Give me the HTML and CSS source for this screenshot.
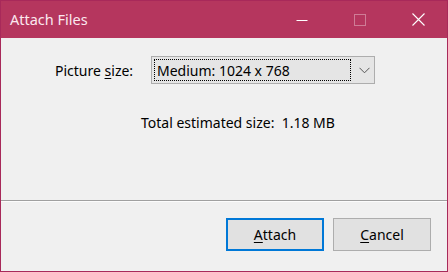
FILE: index.html
```html
<!DOCTYPE html>
<html>
<head>
<meta charset="utf-8">
<link rel="stylesheet" href="styles.css">
</head>
<body>
<div class="window">
  <div class="titlebar">
    <div class="title">Attach Files</div>
    <div class="controls">
      <div class="ctl">
        <svg width="12" height="12" viewBox="0 0 12 12"><path d="M0.5 6.5H11.5" stroke="#fff" stroke-width="1"/></svg>
      </div>
      <div class="ctl">
        <svg width="12" height="12" viewBox="0 0 12 12"><rect x="0.5" y="0.5" width="11" height="11" fill="none" stroke="rgba(255,255,255,0.35)" stroke-width="1"/></svg>
      </div>
      <div class="ctl">
        <svg width="13" height="13" viewBox="0 0 13 13"><path d="M0.5 0.5L12.5 12.5M12.5 0.5L0.5 12.5" stroke="#fff" stroke-width="1.1"/></svg>
      </div>
    </div>
  </div>
  <div class="body">
    <div class="content">
      <div class="row">
        <span class="label">Picture <u>s</u>ize:</span>
        <div class="select">
          <div class="focus">Medium: 1024 x 768</div>
          <svg class="chev" width="11" height="7" viewBox="0 0 11 7"><path d="M0.5 0.8L5.5 5.8L10.5 0.8" fill="none" stroke="#555" stroke-width="1"/></svg>
        </div>
      </div>
      <div class="total">Total estimated size:&nbsp; 1.18 MB</div>
    </div>
    <div class="sep"></div>
    <div class="footer">
      <button class="btn default"><u>A</u>ttach</button>
      <button class="btn"><u>C</u>ancel</button>
    </div>
  </div>
</div>
</body>
</html>
```
FILE: styles.css
```css
html, body {
  margin: 0;
  padding: 0;
}
body {
  width: 448px;
  height: 272px;
  overflow: hidden;
  font-family: "Noto Sans", "Open Sans", sans-serif;
  font-size: 14px;
  color: #000;
}
.window {
  width: 448px;
  height: 272px;
  box-sizing: border-box;
  border: 1px solid #a8295a;
  display: flex;
  flex-direction: column;
  background: #f0f0f0;
}
.titlebar {
  height: 37px;
  flex: none;
  background: #b5365e;
  display: flex;
  align-items: center;
}
.title {
  padding-left: 9px;
  color: #fbe8ee;
  font-size: 14.5px;
  flex: 1;
  margin-top: -1px;
}
.controls {
  display: flex;
  height: 100%;
}
.ctl {
  width: 58px;
  display: flex;
  align-items: center;
  justify-content: center;
}
.ctl svg { display: block; }
.body {
  flex: 1;
  display: flex;
  flex-direction: column;
}
.content {
  height: 162px;
  box-sizing: border-box;
  padding-top: 18px;
}
.row {
  display: flex;
  align-items: center;
  padding-left: 54px;
}
.label {
  width: 96px;
}
.select {
  width: 224px;
  height: 28px;
  box-sizing: border-box;
  border: 1px solid #adadad;
  background: #e5e5e5;
  display: flex;
  align-items: center;
  padding: 2px;
}
.focus {
  width: 197px;
  height: 22px;
  box-sizing: border-box;
  border: 1px dotted #000;
  display: flex;
  align-items: center;
  padding-left: 2px;
}
.chev {
  margin-left: 8px;
}
.total {
  margin-top: 29px;
  padding-left: 140px;
}
.sep {
  height: 1px;
  background: #a0a0a0;
  border-bottom: 1px solid #fcfcfc;
}
.footer {
  flex: 1;
  display: flex;
  justify-content: flex-end;
  align-items: flex-start;
  padding-top: 16px;
  padding-right: 16px;
  gap: 9px;
}
.btn {
  font-family: inherit;
  font-size: 14px;
  width: 98px;
  height: 33px;
  box-sizing: border-box;
  background: #e1e1e1;
  border: 1px solid #adadad;
  color: #000;
  padding: 0;
  margin: 0;
}
.btn.default {
  border: 2px solid #0078d7;
}
u {
  text-decoration-thickness: 1px;
  text-underline-offset: 2px;
}
```
